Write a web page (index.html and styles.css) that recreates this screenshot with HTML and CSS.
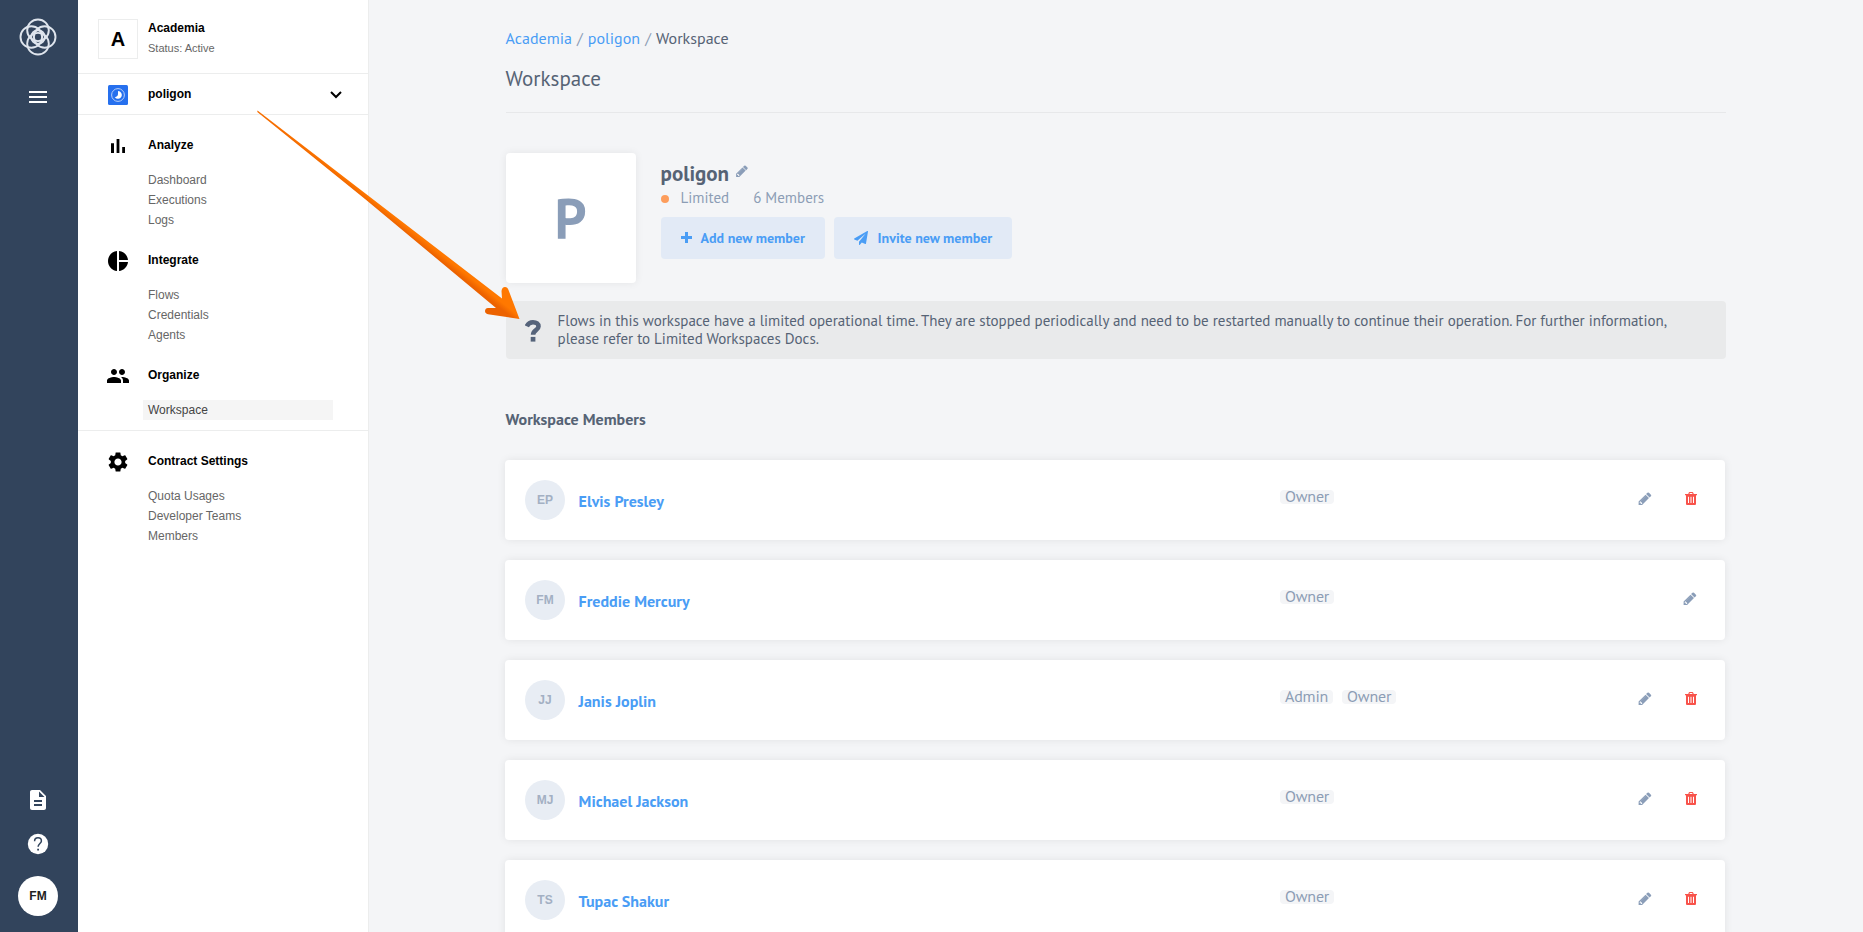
FILE: index.html
```html
<!DOCTYPE html>
<html lang="en">
<head>
<meta charset="utf-8">
<title>Workspace</title>
<link rel="stylesheet" href="styles.css">
</head>
<body>
<svg class="sprite" aria-hidden="true">
  <symbol id="pencil" viewBox="128 100 1536 1564"><path d="M491 1536l91-91-235-235-91 91v107h128v128h107zm469-1120l416 416-832 832h-416v-416zm683 96q0 53-37 90l-166 166-416-416 166-165q36-38 90-38 53 0 91 38l235 234q37 39 37 91z"/><path d="M420 1140L990 570" stroke="#fff" stroke-opacity=".2" stroke-width="80"/></symbol>
  <symbol id="trash" viewBox="0 0 12 13"><path fill-rule="evenodd" d="M3.500 1.200Q3.800 0 4.800 0h2.400Q8.200 0 8.500 1.200L8.700 2H12v1.200h-1V12q0 1-1 1H2q-1 0-1-1V3.200H0V2h3.300zM4.500 2h3L7.200 1H4.800zM3 4.800V11h1V4.800zm2.500 0V11h1V4.800zm2.500 0V11h1V4.800z"/></symbol>
</svg>
<div class="app">
  <aside class="rail">
    <div class="rail-top">
      <svg class="brand" viewBox="0 0 38 38"><g fill="none" stroke="#dfe5ed" stroke-width="1.900"><circle cx="19" cy="12.300" r="10.800"/><circle cx="19" cy="25.700" r="10.800"/><circle cx="12.300" cy="19" r="10.800"/><circle cx="25.700" cy="19" r="10.800"/><circle cx="19" cy="19" r="6.800"/></g></svg>
      <svg class="burger" viewBox="0 0 24 24"><path fill="#fff" d="M3 18h18v-2H3v2zm0-5h18v-2H3v2zm0-7v2h18V6H3z"/></svg>
    </div>
    <div class="rail-bottom">
      <svg class="rail-icon" viewBox="0 0 24 24"><path fill="#fff" d="M14 2H6c-1.100 0-1.990.9-1.990 2L4 20c0 1.100.89 2 1.990 2H18c1.100 0 2-.9 2-2V8l-6-6zm2 16H8v-2h8v2zm0-4H8v-2h8v2zm-3-5V3.500L18.500 9H13z"/></svg>
      <svg class="rail-icon" viewBox="0 0 24 24"><circle cx="12" cy="12" r="10.200" fill="#fff"/><path d="M8.600 9.200C8.600 7 10 5.800 12 5.800s3.400 1.200 3.400 3.100c0 2.500-3.300 2.700-3.300 5.900" fill="none" stroke="#32445c" stroke-width="1.500"/><path d="M11.200 16.700h1.800v1.800h-1.800z" fill="#32445c"/></svg>
      <div class="me">FM</div>
    </div>
  </aside>

  <nav class="side">
    <div class="contract">
      <div class="contract-logo">A</div>
      <div><div class="side-title">Academia</div><div class="status">Status: Active</div></div>
    </div>
    <div class="picker">
      <svg class="picker-icon" viewBox="0 0 20 20"><rect width="20" height="20" rx="1.500" fill="#2670ee"/><circle cx="10" cy="10" r="6.400" fill="none" stroke="#b9d0f9" stroke-width="1"/><path d="M10 6a3.900 3.900 0 1 1-3.200 6.200Q10 11.500 10 9z" fill="#fff"/></svg>
      <span class="side-title">poligon</span>
      <svg class="chevron" viewBox="0 0 12 8"><path d="M1 1l5 5 5-5" fill="none" stroke="#000" stroke-width="2"/></svg>
    </div>
    <div class="groups">
      <section class="group">
        <svg class="gicon" viewBox="0 0 24 24"><path d="M5 9.200h3V19H5zM10.600 5h2.800v14h-2.800zm5.600 8H19v6h-2.800z"/></svg>
        <div class="side-title">Analyze</div>
        <ul><li>Dashboard</li><li>Executions</li><li>Logs</li></ul>
      </section>
      <section class="group">
        <svg class="gicon" viewBox="0 0 24 24"><path d="M11 2v20c-5.070-.5-9-4.790-9-10s3.930-9.500 9-10zm2.030 0v8.990H22c-.47-4.740-4.240-8.520-8.970-8.990zm0 11.010V22c4.740-.47 8.500-4.250 8.970-8.990h-8.970z"/></svg>
        <div class="side-title">Integrate</div>
        <ul><li>Flows</li><li>Credentials</li><li>Agents</li></ul>
      </section>
      <section class="group">
        <svg class="gicon" viewBox="0 0 24 24"><path d="M16 11c1.660 0 2.990-1.340 2.990-3S17.660 5 16 5s-3 1.340-3 3 1.340 3 3 3zm-8 0c1.660 0 2.990-1.340 2.990-3S9.660 5 8 5 5 6.340 5 8s1.340 3 3 3zm0 2c-2.330 0-7 1.170-7 3.500V19h14v-2.500c0-2.330-4.670-3.500-7-3.500zm8 0c-.29 0-.62.02-.97.050 1.160.84 1.970 1.970 1.970 3.450V19h6v-2.500c0-2.330-4.670-3.500-7-3.500z"/></svg>
        <div class="side-title">Organize</div>
        <ul><li class="active">Workspace</li></ul>
      </section>
    </div>
    <div class="groups settings">
      <section class="group">
        <svg class="gicon" viewBox="0 0 24 24"><path d="M19.140 12.940c.04-.3.060-.61.060-.94 0-.32-.02-.64-.07-.94l2.030-1.580c.18-.14.230-.41.120-.61l-1.920-3.320c-.12-.22-.37-.29-.59-.22l-2.390.96c-.5-.38-1.030-.7-1.620-.94l-.36-2.540c-.04-.24-.24-.41-.48-.41h-3.840c-.24 0-.43.17-.47.410l-.36 2.540c-.59.24-1.130.57-1.620.94l-2.390-.96c-.22-.08-.47 0-.59.220L2.740 8.870c-.12.21-.08.470.12.610l2.030 1.580c-.05.300-.09.630-.09.940s.02.640.07.940l-2.030 1.580c-.18.14-.23.410-.12.610l1.920 3.320c.12.220.37.290.59.220l2.390-.96c.5.380 1.030.7 1.620.94l.36 2.540c.05.240.24.410.48.410h3.840c.24 0 .44-.17.47-.41l.36-2.540c.59-.24 1.130-.56 1.620-.94l2.390.96c.22.080.47 0 .59-.22l1.920-3.320c.12-.22.070-.47-.12-.61l-2.010-1.580zM12 15.600c-1.980 0-3.600-1.620-3.600-3.600s1.620-3.600 3.600-3.600 3.600 1.620 3.600 3.600-1.620 3.600-3.600 3.600z"/></svg>
        <div class="side-title">Contract Settings</div>
        <ul><li>Quota Usages</li><li>Developer Teams</li><li>Members</li></ul>
      </section>
    </div>
  </nav>

  <main class="main">
    <div class="crumbs"><a>Academia</a><i>/</i><a>poligon</a><i>/</i><span>Workspace</span></div>
    <h1>Workspace</h1>
    <header class="hero">
      <div class="hero-logo">P</div>
      <div class="hero-info">
        <div class="hero-name"><h2>poligon</h2><svg class="pencil small"><use href="#pencil"/></svg></div>
        <div class="meta"><b class="dot"></b><span class="plan">Limited</span><span class="count">6 Members</span></div>
        <div class="buttons">
          <button class="btn add"><svg viewBox="0 0 11 11"><path d="M4 0h3v4h4v3H7v4H4V7H0V4h4z"/></svg><span>Add new member</span></button>
          <button class="btn invite"><svg viewBox="0 0 1792 1792"><path d="M1764 11q33 24 27 64l-256 1536q-5 29-32 45-14 8-31 8-11 0-24-5l-453-185-242 295q-18 23-49 23-13 0-22-4-19-7-30.500-23.500t-11.500-36.500v-349l864-1059-1069 925-395-162q-37-14-40-55-2-40 32-59l1664-960q15-9 32-9 20 0 36 11z"/></svg><span>Invite new member</span></button>
        </div>
      </div>
    </header>
    <div class="notice">
      <svg class="question" viewBox="0 0 16 22"><path d="M1.800 6.400C3 3.700 5 2.300 8 2.300c3.400 0 5.500 1.600 5.500 4.200 0 3.900-5.400 3.600-5.400 8.300" fill="none" stroke="#55637a" stroke-width="4.600"/><path d="M5.700 16.900h4.700v4.700H5.700z" fill="#55637a"/></svg>
      <p>Flows in this workspace have a limited operational time. They are stopped periodically and need to be restarted manually to continue their operation. For further information,<br>please refer to Limited Workspaces Docs.</p>
    </div>
    <h3>Workspace Members</h3>
    <div class="members">
      <article class="card"><div class="avatar">EP</div><div class="name">Elvis Presley</div><div class="roles"><span><em>Owner</em></span></div><div class="actions"><svg class="pencil"><use href="#pencil"/></svg><svg class="trash"><use href="#trash"/></svg></div></article>
      <article class="card"><div class="avatar">FM</div><div class="name">Freddie Mercury</div><div class="roles"><span><em>Owner</em></span></div><div class="actions"><svg class="pencil"><use href="#pencil"/></svg></div></article>
      <article class="card"><div class="avatar">JJ</div><div class="name">Janis Joplin</div><div class="roles"><span><em>Admin</em></span><span><em>Owner</em></span></div><div class="actions"><svg class="pencil"><use href="#pencil"/></svg><svg class="trash"><use href="#trash"/></svg></div></article>
      <article class="card"><div class="avatar">MJ</div><div class="name">Michael Jackson</div><div class="roles"><span><em>Owner</em></span></div><div class="actions"><svg class="pencil"><use href="#pencil"/></svg><svg class="trash"><use href="#trash"/></svg></div></article>
      <article class="card"><div class="avatar">TS</div><div class="name">Tupac Shakur</div><div class="roles"><span><em>Owner</em></span></div><div class="actions"><svg class="pencil"><use href="#pencil"/></svg><svg class="trash"><use href="#trash"/></svg></div></article>
    </div>
  </main>
</div>
<svg class="arrow" viewBox="0 0 300 250">
  <defs><linearGradient id="shade" gradientUnits="userSpaceOnUse" x1="191" y1="156" x2="187.500" y2="160.400"><stop offset="0" stop-color="#ff7800"/><stop offset="1" stop-color="#ec6200"/></linearGradient></defs>
  <path fill="url(#shade)" d="M17.500 20.500L262 208.500 261.500 201Q262 197 265 197 267.500 197 268.500 200L279.500 229 248 224.300Q245 223.500 245 221 245.300 218 248 218L256 218 125 109 17.300 22Z"/>
</svg>
</body>
</html>
```
FILE: styles.css
```css
* { box-sizing: border-box; }
body { margin: 0; font-family: "PT Sans", "Noto Sans", sans-serif; color: #566375; background: #f4f5f7; overflow: hidden; }
h1, h2, h3, p, ul { margin: 0; padding: 0; }
svg { display: block; flex: none; }
.sprite { display: none; }
.app { display: flex; height: 932px; overflow: hidden; }

.rail { width: 78px; flex: none; background: #32445c; display: flex; flex-direction: column; justify-content: space-between; align-items: center; padding: 18px 2px 16px 0; }
.rail-top, .rail-bottom { display: flex; flex-direction: column; align-items: center; }
.brand { width: 38px; height: 38px; }
.burger { width: 24px; height: 24px; margin-top: 29px; }
.rail-icon { width: 24px; height: 24px; margin-bottom: 20px; }
.me { width: 40px; height: 40px; border-radius: 50%; background: #fff; color: #222; font: bold 12px/40px "Liberation Sans", sans-serif; text-align: center; }

.side { width: 291px; flex: none; background: #fff; border-right: 1px solid #eceded; font-family: "Liberation Sans", sans-serif; }
.side-title { font-size: 12px; font-weight: bold; line-height: 20px; color: #000; }
.contract { display: flex; height: 74px; padding: 19px 0 0 20px; gap: 10px; border-bottom: 1px solid #eceded; }
.contract-logo { width: 40px; height: 40px; border: 1px solid #eceded; font: bold 20px/39px "Liberation Sans", sans-serif; text-align: center; color: #000; }
.contract .side-title { line-height: 18px; }
.status { margin-top: 3px; font-size: 11px; line-height: 16px; color: #666; }
.picker { display: flex; height: 41px; padding: 1px 26px 0 30px; align-items: center; border-bottom: 1px solid #eceded; }
.picker .side-title { margin: -1px 0 0 20px; }
.picker-icon { width: 20px; height: 20px; margin-top: 1px; }
.chevron { width: 12px; height: 8px; margin-left: auto; }
.groups { padding: 20px 0 0 28px; height: 316px; border-bottom: 1px solid #eceded; }
.group { display: grid; grid-template-columns: 24px 1fr; column-gap: 18px; height: 115px; align-content: start; }
.gicon { width: 24px; height: 24px; margin-top: -1px; }
.group .side-title { height: 35px; }
.group ul { grid-column: 2; list-style: none; font-size: 12px; line-height: 20px; color: #666; }
.group .active { margin: 0 35px 0 -5px; padding-left: 5px; background: #f5f5f5; color: #444; }
.settings { border: 0; }

.main { flex: 1; padding: 0 137px 0 136.6px; }
.crumbs { display: flex; padding: 26px 0 1px; font-size: 16px; line-height: 24px; color: #566375; }
.crumbs a { color: #4a9df5; }
.crumbs i { font-style: normal; color: #8c9db5; width: 16px; text-align: center; }
h1 { font-size: 21px; font-weight: normal; line-height: 30px; height: 62px; padding-top: 13px; border-bottom: 1px solid #e7e8ea; }
.hero { display: flex; margin-top: 40px; gap: 25px; }
.hero-logo { width: 130px; height: 130px; border-radius: 4px; background: #fff; box-shadow: 0 0 8px rgba(0,0,0,.07); color: #8a9db8; font-size: 56px; line-height: 131px; font-weight: bold; text-align: center; }
.hero-name { display: flex; height: 34px; padding-top: 8px; gap: 7px; }
h2 { font-size: 21px; line-height: 26px; }
.pencil { width: 14px; height: 13px; fill: #8a9db8; }
.pencil.small { width: 12px; height: 12px; margin-top: 4px; }
.meta { display: flex; align-items: center; height: 22px; font-size: 15px; color: #8c9db5; }
.meta span { margin-top: -2px; }
.dot { width: 8px; height: 8px; border-radius: 50%; background: #fd9d5c; margin: 2px 12px 0 0; }
.meta .count { margin-left: 24px; }
.buttons { display: flex; gap: 9px; margin-top: 8px; }
.btn { display: flex; align-items: center; height: 42px; border: 0; border-radius: 4px; background: #e2eaf6; color: #4a9df5; font: bold 14px "PT Sans", "Noto Sans", sans-serif; padding: 0 0 0 20px; white-space: nowrap; }
.btn svg { fill: #4a9df5; }
.add { width: 164px; }
.add svg { width: 11px; height: 11px; margin: -1px 9px 0 0; }
.invite { width: 178px; }
.invite svg { width: 14px; height: 14px; margin-right: 10px; }
.notice { display: flex; width: 1220px; height: 58px; margin-top: 18px; padding: 11px 0 0 19px; border-radius: 4px; background: #e9eaeb; }
.question { width: 16px; height: 22px; margin: 8px 17px 0 0; }
.notice p { font-size: 15px; line-height: 18px; white-space: nowrap; }
h3 { margin-top: 49px; font-size: 16px; line-height: 22px; }
.members { display: flex; flex-direction: column; gap: 20px; margin-top: 30px; margin-left: -.6px; width: 1220px; }
.card { display: flex; height: 80px; flex: none; padding: 20px 28px 0 20px; border-radius: 4px; background: #fff; box-shadow: 0 0 9px rgba(0,0,0,.08); }
.avatar { width: 40px; height: 40px; border-radius: 50%; background: #e8edf4; color: #a3b0c3; font: bold 12px/40px "Liberation Sans", sans-serif; text-align: center; }
.name { width: 701px; margin-left: 13.600px; font-size: 16px; font-weight: bold; line-height: 22px; padding-top: 10px; color: #4a9df5; }
.roles { display: flex; gap: 9px; padding: 10px 0 0 .4px; }
.roles span { height: 14px; padding: 0 5px; border-radius: 4px; background: #f4f5f7; }
.roles em { display: block; font-style: normal; font-size: 16px; line-height: 14px; margin-top: -1px; letter-spacing: -.18px; color: #8c9db5; }
.actions { display: flex; margin-left: auto; padding-top: 12px; gap: 33px; }
.trash { width: 12px; height: 13px; fill: #f8534b; }
.arrow { position: absolute; left: 240px; top: 90px; width: 300px; height: 250px; }
```
